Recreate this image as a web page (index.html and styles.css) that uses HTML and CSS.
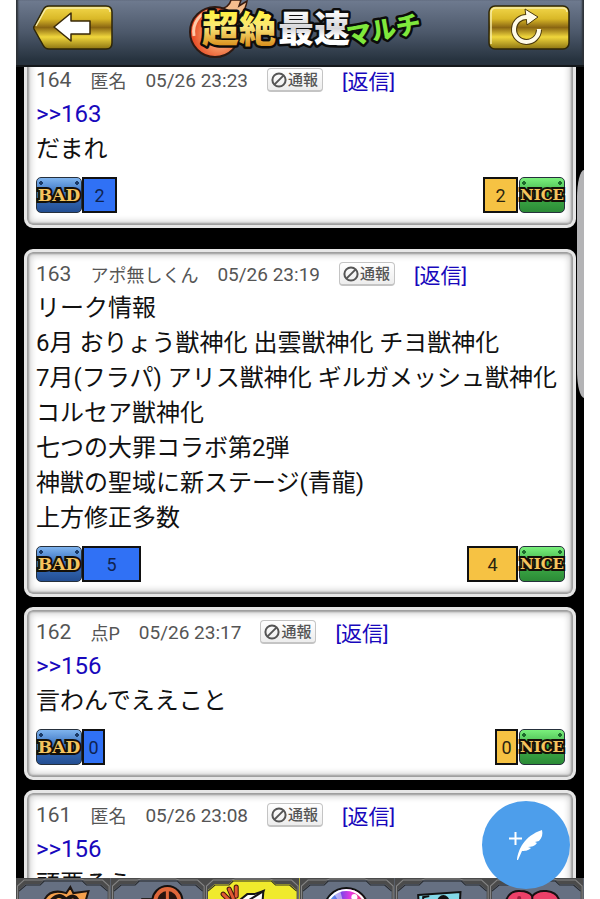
FILE: index.html
```html
<!DOCTYPE html>
<html lang="ja">
<head>
  <meta charset="UTF-8">
  <meta name="viewport" content="width=device-width, initial-scale=1">
  <title>超絶最速マルチ</title>
  <link rel="stylesheet" href="styles.css">
</head>
<body>

  <!-- shared shapes -->
  <svg class="defs" width="0" height="0" aria-hidden="true">
    <defs>
      <linearGradient id="gold" x1="0" y1="0" x2="0" y2="1">
        <stop offset="0" stop-color="#f3d84c"/>
        <stop offset="0.3" stop-color="#d9b827"/>
        <stop offset="0.5" stop-color="#8a6612"/>
        <stop offset="0.72" stop-color="#f0d63c"/>
        <stop offset="1" stop-color="#8c7412"/>
      </linearGradient>
      <linearGradient id="goldText" x1="0" y1="0" x2="0" y2="1">
        <stop offset="0.2" stop-color="#fff23c"/>
        <stop offset="0.5" stop-color="#fbe77a"/>
        <stop offset="0.85" stop-color="#d98f1c"/>
      </linearGradient>
      <linearGradient id="silverText" x1="0" y1="0" x2="0" y2="1">
        <stop offset="0.2" stop-color="#ffffff"/>
        <stop offset="0.55" stop-color="#d5d5d9"/>
        <stop offset="0.7" stop-color="#ffffff"/>
      </linearGradient>
      <radialGradient id="ball" cx="0.6" cy="0.55" r="0.6">
        <stop offset="0" stop-color="#ffd9b0"/>
        <stop offset="0.6" stop-color="#f08050"/>
        <stop offset="1" stop-color="#e8401c"/>
      </radialGradient>
      <linearGradient id="rainbow" x1="0" y1="0" x2="1" y2="0">
        <stop offset="0" stop-color="#48e0f0"/>
        <stop offset="0.35" stop-color="#6a48e8"/>
        <stop offset="0.6" stop-color="#e838e0"/>
        <stop offset="1" stop-color="#f83838"/>
      </linearGradient>
      <symbol id="ban" viewBox="0 0 16 16">
        <circle cx="8" cy="8" r="6.6" fill="none" stroke="#555" stroke-width="2"/>
        <path d="M3.6 12.4 12.4 3.6" stroke="#555" stroke-width="2"/>
      </symbol>
      <symbol id="frame" viewBox="0 0 94 60">
        <path d="M0 0H94V60H91V12L84 6H70L66 2H28L24 6H10L3 12V60H0Z" fill="#4b4b4b"/>
        <path d="M1.500 60V8L8 2H26L30 1H64L68 2H86L92.500 8V60" fill="none" stroke="#858585"/>
        <path d="M3 13 10 7H24L28 3H66L70 7H84L91 13" fill="none" stroke="#26282b"/>
      </symbol>
    </defs>
  </svg>

  <div class="app">
    <header class="header">
      <button class="header-button" aria-label="戻る">
        <svg width="82" height="46" viewBox="0 0 82 46">
          <path d="M17 1H74Q80 1 80 7V38Q80 44 74 44H17Q13 44 11 40L2 24Q1 22 3 20L11 5Q13 1 17 1Z" fill="url(#gold)" stroke="#2e2608" stroke-width="1.500"/>
          <path d="M4 21 13 5Q14 3 17 3H74Q78 3 78 7" fill="none" stroke="#f6eba6" stroke-width="1.500"/>
          <path d="M22 22 39 8V16H58V29H39V36Z" fill="#fff" stroke="#3a2a08" stroke-width="1.500" stroke-linejoin="round"/>
        </svg>
      </button>

      <h1 class="logo">
        <svg width="240" height="62" viewBox="0 0 240 62">
          <path d="M38 9Q48 8 50 0H60L58 6L66 1Q64 16 48 20Z" fill="#f6bd8e" stroke="#3a1c10" stroke-width="1.500"/>
          <circle cx="34" cy="32" r="25" fill="url(#ball)" stroke="#2c1a14" stroke-width="2"/>
          <path d="M13 36A22 22 0 0 1 32 10" fill="none" stroke="#ffc9a8" stroke-width="3"/>
          <text class="logo-gold" x="21" y="43">超絶</text>
          <text class="logo-silver" x="97" y="42">最速</text>
          <g class="logo-sub" transform="rotate(-10 168 44)">
            <text x="167" y="45">マルチ</text>
          </g>
        </svg>
      </h1>

      <button class="header-button" aria-label="更新">
        <svg width="82" height="46" viewBox="0 0 82 46">
          <rect x="1" y="1" width="80" height="43" rx="6" fill="url(#gold)" stroke="#2e2608" stroke-width="1.500"/>
          <path d="M3 39V8Q3 3 8 3H74Q79 3 79 7" fill="none" stroke="#f6eba6" stroke-width="1.500"/>
          <path d="M39 12A12.500 12.500 0 1 0 51 25" fill="none" stroke="#4b390b" stroke-width="6"/>
          <path d="M37 4 50 12 39 20Z" fill="#fffbe8" stroke="#4b390b"/>
          <path d="M40 12A12.500 12.500 0 1 0 51 24" fill="none" stroke="#fffbe8" stroke-width="4"/>
        </svg>
      </button>
    </header>

    <main class="posts">
      <article class="post">
        <div class="post-meta">
          <span class="post-number">164</span>
          <span class="post-name">匿名</span>
          <time class="post-date">05/26 23:23</time>
          <button class="report"><svg width="16" height="16"><use href="#ban"/></svg>通報</button>
          <a class="reply" href="#">[返信]</a>
        </div>
        <p class="post-body"><a href="#">&gt;&gt;163</a><br>だまれ</p>
        <div class="votes">
          <div class="vote"><button class="bad">BAD</button><span class="count count-bad" style="width: 35px">2</span></div>
          <div class="vote"><span class="count count-nice" style="width: 35px">2</span><button class="nice">NICE</button></div>
        </div>
      </article>

      <!-- advert slot sits between the first and second post -->
      <div class="ad-slot"></div>

      <article class="post">
        <div class="post-meta">
          <span class="post-number">163</span>
          <span class="post-name">アポ無しくん</span>
          <time class="post-date">05/26 23:19</time>
          <button class="report"><svg width="16" height="16"><use href="#ban"/></svg>通報</button>
          <a class="reply" href="#">[返信]</a>
        </div>
        <p class="post-body">リーク情報<br>6月 おりょう獣神化 出雲獣神化 チヨ獣神化<br>7月(フラパ) アリス獣神化 ギルガメッシュ獣神化 コルセア獣神化<br>七つの大罪コラボ第2弾<br>神獣の聖域に新ステージ(青龍)<br>上方修正多数</p>
        <div class="votes">
          <div class="vote"><button class="bad">BAD</button><span class="count count-bad" style="width: 59px">5</span></div>
          <div class="vote"><span class="count count-nice" style="width: 51px">4</span><button class="nice">NICE</button></div>
        </div>
      </article>

      <article class="post">
        <div class="post-meta">
          <span class="post-number">162</span>
          <span class="post-name">点P</span>
          <time class="post-date">05/26 23:17</time>
          <button class="report"><svg width="16" height="16"><use href="#ban"/></svg>通報</button>
          <a class="reply" href="#">[返信]</a>
        </div>
        <p class="post-body"><a href="#">&gt;&gt;156</a><br>言わんでええこと</p>
        <div class="votes">
          <div class="vote"><button class="bad">BAD</button><span class="count count-bad" style="width: 23px">0</span></div>
          <div class="vote"><span class="count count-nice" style="width: 23px">0</span><button class="nice">NICE</button></div>
        </div>
      </article>

      <article class="post">
        <div class="post-meta">
          <span class="post-number">161</span>
          <span class="post-name">匿名</span>
          <time class="post-date">05/26 23:08</time>
          <button class="report"><svg width="16" height="16"><use href="#ban"/></svg>通報</button>
          <a class="reply" href="#">[返信]</a>
        </div>
        <p class="post-body"><a href="#">&gt;&gt;156</a><br>頭悪そう</p>
      </article>
    </main>

    <nav class="tabs">
      <a class="tab" href="#" aria-label="モンスター">
        <svg viewBox="0 0 94 60"><use href="#frame"/>
          <path d="M28 22Q34 10 50 15L54 9L57 15L72 13L67 30V50H28Z" fill="#f5a04c" stroke="#1c1410" stroke-width="2"/>
          <path d="M34 24Q42 13 50 22Q58 14 62 24" fill="none" stroke="#1c1410" stroke-width="4"/>
        </svg>
      </a>
      <a class="tab" href="#" aria-label="時間">
        <svg viewBox="0 0 94 60"><use href="#frame"/>
          <path d="M30 20H46V40H30Z" fill="#1b1512"/>
          <circle cx="56" cy="23" r="16" fill="#15100e"/>
          <circle cx="56" cy="23" r="12" fill="#27150f" stroke="#e0673a" stroke-width="4"/>
          <path d="M56 13V24H64" fill="none" stroke="#e0673a" stroke-width="3"/>
        </svg>
      </a>
      <a class="tab active" href="#" aria-label="掲示板">
        <svg viewBox="0 0 94 60"><use href="#frame"/>
          <path d="M32 24 42 16 49 16 58 13 56 17 32 50Z" fill="#fff" stroke="#151515" stroke-width="2"/>
          <path d="M34 28 58 13 55 50H30Z" fill="#fff" stroke="#151515" stroke-width="2"/>
          <path d="M18 16 24 22M24 11 28 20M31 9 31 18" stroke="#3d1810" stroke-width="5" stroke-linecap="round"/>
          <path d="M18 16 24 22M24 11 28 20M31 9 31 18" stroke="#e25a33" stroke-width="3" stroke-linecap="round"/>
        </svg>
      </a>
      <a class="tab" href="#" aria-label="オーブ">
        <svg viewBox="0 0 94 60"><use href="#frame"/>
          <circle cx="46" cy="32" r="22" fill="url(#rainbow)" stroke="#111" stroke-width="2"/>
          <circle cx="46" cy="32" r="20" fill="none" stroke="#fff" stroke-width="2"/>
          <path d="M46 36 34 16 40 13Z" fill="#fff" opacity="0.500"/>
          <circle cx="54" cy="19" r="3" fill="#fff"/>
        </svg>
      </a>
      <a class="tab" href="#" aria-label="カード">
        <svg viewBox="0 0 94 60"><use href="#frame"/>
          <path d="M23 17 65 14 63 50H25Z" fill="#82d8e8" stroke="#111" stroke-width="2"/>
          <path d="M28 23V19L34 18" fill="none" stroke="#111" stroke-width="2"/>
          <circle cx="48" cy="23" r="6" fill="#111"/>
        </svg>
      </a>
      <a class="tab" href="#" aria-label="お気に入り">
        <svg viewBox="0 0 94 60"><use href="#frame"/>
          <path d="M43 56Q14 34 17 22Q21 12 31 13Q39 13 43 18Q48 12 57 13Q68 14 70 23Q71 36 43 56Z" fill="#ec4068" stroke="#171012" stroke-width="2"/>
          <path d="M43 17V26" stroke="#171012" stroke-width="2"/>
          <circle cx="30" cy="20" r="2" fill="#9c1c3c"/>
        </svg>
      </a>
    </nav>

    <div class="edge-panel"></div>

    <button class="compose" aria-label="投稿する">
      <svg width="36" height="32" viewBox="0 0 36 32">
        <path d="M1 9.500H14M7.500 3V16" stroke="#fff" stroke-width="2"/>
        <path d="M9 31C10 21 16 7 34 1C35 5 34 9 31 12L27 13L29 14C27 17 23 18 20 18L23 19C20 22 16 22 14 22L10 31Z" fill="#fff"/>
      </svg>
    </button>
  </div>

</body>
</html>
```
FILE: styles.css
```css
* {
  box-sizing: border-box;
  margin: 0;
  padding: 0;
}

body {
  font-family: Roboto, 'Noto Sans CJK JP', sans-serif;
  background: #fff;
  color: #111;
}

button {
  border: none;
  background: none;
  font-family: inherit;
  cursor: pointer;
}

a {
  color: #1808bc;
  text-decoration: none;
}

svg {
  display: block;
}

.defs {
  position: absolute;
}

.app {
  position: relative;
  display: flex;
  flex-direction: column;
  height: 100vh;
  margin: 0 16px;
  background: #000;
  overflow: hidden;
}

/* header */

.header {
  position: relative;
  z-index: 1;
  flex: none;
  display: flex;
  justify-content: space-between;
  align-items: flex-start;
  height: 67px;
  padding: 0 14px 0 16px;
  background: linear-gradient(#6f7b90, #4c586a 50%, #27333f 92%);
  border-bottom: 2px solid #14181b;
  box-shadow: inset 3px 0 2px -1px #2d3237, inset -3px 0 2px -1px #2d3237;
}

.header-button {
  padding-top: 5px;
}

.logo svg {
  overflow: visible;
}

.logo-gold,
.logo-silver,
.logo-sub {
  font-family: 'Noto Sans CJK JP', sans-serif;
  font-weight: 900;
  stroke: #0c0c0c;
  stroke-width: 5px;
  stroke-linejoin: round;
  paint-order: stroke;
}

.logo-gold {
  font-size: 37px;
  fill: url(#goldText);
}

.logo-silver {
  font-size: 36px;
  fill: url(#silverText);
}

.logo-sub {
  font-size: 25px;
  fill: #7fe83c;
}

/* posts */

.posts {
  flex: 1;
  min-height: 0;
  display: flex;
  flex-direction: column;
  gap: 10px;
  margin-top: -12px;
  padding: 0 8px;
}

.ad-slot {
  height: 1px;
  flex: none;
}

.post {
  flex: none;
  padding: 5px 6px 12px;
  background: #fff;
  border: 3px solid #e6e6e6;
  border-radius: 9px;
  box-shadow: inset 0 0 2px 2px #9c9c9c, inset 0 0 6px 4px #d4d4d4;
}

.post-meta {
  display: flex;
  align-items: center;
  gap: 19px;
  height: 34px;
  padding-left: 3px;
  font-size: 18px;
  color: #555;
  white-space: nowrap;
}

.post-number {
  font-size: 21px;
}

.post-name {
  font-size: 18px;
}

.post-date {
  font-size: 19px;
}

.report {
  display: flex;
  align-items: center;
  gap: 1px;
  height: 24px;
  padding: 0 4px 0 3px;
  border: 1px solid #c4c4c4;
  border-bottom-width: 2px;
  border-radius: 4px;
  background: linear-gradient(#fff, #ededed);
  color: #555;
  font-size: 15px;
  font-weight: 500;
  line-height: 20px;
}

.reply {
  font-size: 21px;
}

.post-body {
  padding-left: 3px;
  font-size: 24px;
  line-height: 35px;
}

.votes {
  display: flex;
  justify-content: space-between;
  padding: 10px 2px 0 3px;
}

.vote {
  display: flex;
}

.bad,
.nice {
  width: 46px;
  height: 36px;
  border: 1px solid #26303c;
  border-radius: 5px;
  color: #f5c45e;
  font-family: 'DejaVu Serif', serif;
  font-size: 17px;
  font-weight: bold;
  -webkit-text-stroke: 4px #141008;
  paint-order: stroke;
  display: flex;
  align-items: center;
  justify-content: center;
}

.bad {
  background:
    radial-gradient(circle at 4px 5px, #1b3a66 2px, transparent 2px),
    radial-gradient(circle at 40px 5px, #1b3a66 2px, transparent 2px),
    linear-gradient(#7fb4ee, #3a72c0 45%, #234e92);
}

.nice {
  background:
    radial-gradient(circle at 4px 5px, #1c6a2c 2px, transparent 2px),
    radial-gradient(circle at 40px 5px, #1c6a2c 2px, transparent 2px),
    linear-gradient(#7af07c, #3fae48 50%, #2b8a36);
  font-size: 15px;
}

.count {
  display: flex;
  align-items: center;
  justify-content: center;
  height: 36px;
  border: 2px solid #111;
  font-size: 18px;
}

.count-bad {
  background: #3071f5;
  color: #0f2350;
}

.count-nice {
  margin-right: 1px;
  background: #f6c243;
  color: #2b2410;
}

/* bottom tabs */

.tabs {
  position: relative;
  flex: none;
  display: grid;
  grid-template-columns: repeat(6, 1fr);
  height: 21px;
  overflow: hidden;
}

.tab {
  background: #667082;
}

.tab.active {
  background: #f0ea2c;
}

/* things floating over the list */

.edge-panel {
  position: absolute;
  top: 170px;
  right: 0;
  width: 7px;
  height: 228px;
  background: #b4b4b6;
  border-radius: 7px 0 0 7px / 28px 0 0 28px;
}

.compose {
  position: absolute;
  right: 14px;
  bottom: 10px;
  z-index: 2;
  width: 88px;
  height: 88px;
  border-radius: 50%;
  background: #4d9eeb;
  display: flex;
  align-items: center;
  justify-content: center;
}
```
